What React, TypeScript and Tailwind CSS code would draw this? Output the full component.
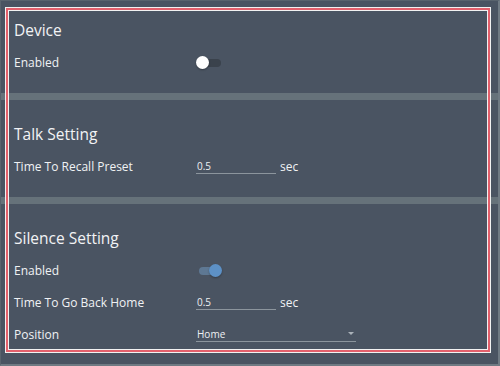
import React from "react";

const font = { fontFamily: '"Open Sans", "Noto Sans", sans-serif' };

function Toggle({ on }: { on: boolean }) {
  return (
    <div className="relative h-[13px] w-[26px]">
      <div
        className={
          on
            ? "absolute left-[3px] top-[3px] h-[8px] w-[20px] rounded-full bg-[#5e7893]"
            : "absolute left-[5px] top-[3px] h-[8px] w-[20px] rounded-full bg-[#3a424c]"
        }
      />
      <div
        className={
          on
            ? "absolute left-[13px] top-0 h-[13px] w-[13px] rounded-full bg-[#5d91c6] shadow-[0_1px_2px_rgba(0,0,0,0.3)]"
            : "absolute left-0 top-0 h-[13px] w-[13px] rounded-full bg-white shadow-[0_1px_2px_rgba(0,0,0,0.3)]"
        }
      />
    </div>
  );
}

function Row({ label, children }: { label: string; children: React.ReactNode }) {
  return (
    <div className="flex h-[32px] items-center">
      <div className="w-[182px] pt-[2px] text-[12px] text-[#f0f2f4]">{label}</div>
      <div className="flex items-center">{children}</div>
    </div>
  );
}

function NumInput({ value }: { value: string }) {
  return (
    <div className="flex items-center">
      <div className="relative h-[16px] w-[80px] border-b border-[#8c959d]">
        <span className="absolute bottom-[2px] left-[1px] text-[10px] leading-none text-[#eef0f2]">{value}</span>
      </div>
      <span className="ml-[4px] pt-[2px] text-[12px] text-[#f0f2f4]">sec</span>
    </div>
  );
}

function Heading({ children }: { children: React.ReactNode }) {
  return <div className="flex h-[32px] items-center pt-[2px] text-[15.5px] text-[#f2f3f5]">{children}</div>;
}

export default function App() {
  return (
    <div
      className="relative h-[366px] w-[500px] overflow-hidden border-l border-t border-b-2 border-r-2 border-l-[#59636d] border-t-[#59636d] border-b-[#6f7a83] border-r-[#6f7a83] bg-[#4a5462]"
      style={font}
    >
      <div className="px-[13px] pb-[15px] pt-[13px]">
        <Heading>Device</Heading>
        <Row label="Enabled">
          <Toggle on={false} />
        </Row>
      </div>
      <div className="-ml-px h-[7px] w-[500px] bg-[#66727a]" />
      <div className="px-[13px] pb-[15px] pt-[18px]">
        <Heading>Talk Setting</Heading>
        <Row label="Time To Recall Preset">
          <NumInput value="0.5" />
        </Row>
      </div>
      <div className="-ml-px h-[7px] w-[500px] bg-[#66727a]" />
      <div className="px-[13px] pt-[18px]">
        <Heading>Silence Setting</Heading>
        <Row label="Enabled">
          <Toggle on={true} />
        </Row>
        <Row label="Time To Go Back Home">
          <NumInput value="0.5" />
        </Row>
        <Row label="Position">
          <div className="relative h-[16px] w-[160px] border-b border-[#8c959d]">
            <span className="absolute bottom-[2px] left-[1px] text-[10px] leading-none text-[#eef0f2]">Home</span>
            <span className="absolute right-[2px] top-[6px] h-0 w-0 border-l-[3px] border-r-[3px] border-t-[3px] border-l-transparent border-r-transparent border-t-[#aab2b9]" />
          </div>
        </Row>
      </div>
      <div className="pointer-events-none absolute left-[4px] top-[6px] h-[346px] w-[486px] border border-[#f2f2f2]">
        <div className="h-full w-full border-2 border-[#e3606c]">
          <div className="h-full w-full border border-[#f2f2f2]" />
        </div>
      </div>
    </div>
  );
}
